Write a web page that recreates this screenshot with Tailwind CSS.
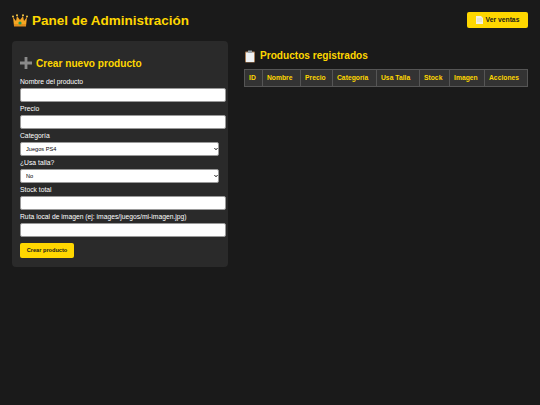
<!DOCTYPE html>
<html lang="es">
<head>
    <meta charset="UTF-8">
    <title>Panel de Administración</title>
    <script src="https://cdn.jsdelivr.net/npm/@tailwindcss/browser@4"></script>
</head>
<body class="bg-[#1a1a1a] h-[405px] overflow-hidden font-['Liberation_Sans',sans-serif] text-white">
    <div class="px-3 pt-3">
        <!-- Header -->
        <div class="flex justify-between items-center h-4 mb-[13px]">
            <h1 class="flex items-center gap-[4px] text-[13.5px] font-bold text-[#ffd700] leading-none">
                <svg class="w-4 h-4" viewBox="0 0 16 16">
                    <path d="M1 5 L4 9 L5 4 L8 8 L11 4 L12 9 L15 5 L14 14 L2 14 Z" fill="#f5a623"/>
                    <path d="M2 12h12v2.5H2z" fill="#e08e1b"/>
                    <circle cx="8" cy="11" r="1.6" fill="#1f9d55"/>
                    <circle cx="1" cy="4.5" r="1" fill="#f7c948"/><circle cx="5" cy="3.3" r="1" fill="#f7c948"/>
                    <circle cx="11" cy="3.3" r="1" fill="#f7c948"/><circle cx="15" cy="4.5" r="1" fill="#f7c948"/>
                </svg>
                <span class="pt-[2px]">Panel de Administración</span>
            </h1>
            <a class="flex items-center gap-[3px] h-4 w-[61px] justify-center bg-[#ffd700] rounded-[2px] text-[#1a1a1a] text-[6.75px] font-bold">
                <svg class="w-[7px] h-[8px]" viewBox="0 0 7 8"><path d="M0 0h5l2 2v6H0z" fill="#f3f0e0"/><path d="M1 3h5M1 5h5" stroke="#cfcab0" stroke-width=".6"/></svg>
                <span class="pt-[1px]">Ver ventas</span>
            </a>
        </div>

        <div class="flex gap-4 items-start">
            <!-- Form -->
            <div class="w-[216px] h-[226px] bg-[#2a2a2a] rounded-[4px] px-2 pt-[17px]">
                <h2 class="flex items-center gap-[4px] h-[10px] text-[10.125px] font-bold text-[#ffd700] leading-none mb-[10px]">
                    <svg class="w-3 h-3" viewBox="0 0 12 12"><path d="M4.6 0h2.8v4.6H12v2.8H7.4V12H4.6V7.4H0V4.6h4.6z" fill="#8a8a8a"/></svg>
                    <span class="pt-[2px]">Crear nuevo producto</span>
                </h2>
                <label class="block text-[6.75px] leading-[8px] mb-[2px]">Nombre del producto</label>
                <input class="block w-[206px] h-[14px] bg-white rounded-[2px] border border-[#999] mb-[3px]">
                <label class="block text-[6.75px] leading-[8px] mb-[2px]">Precio</label>
                <input class="block w-[206px] h-[14px] bg-white rounded-[2px] border border-[#999] mb-[3px]">
                <label class="block text-[6.75px] leading-[8px] mb-[2px]">Categoría</label>
                <div class="relative w-[199px] h-[14px] mb-[3px]">
                    <select class="block appearance-none w-full h-full bg-white rounded-[2px] text-black text-[5.625px] pl-[5px] border border-[#999]">
                        <option>Juegos PS4</option>
                    </select>
                    <svg class="absolute right-[1px] top-[5px] w-[4px] h-[4px] pointer-events-none" viewBox="0 0 4 4"><path d="M0.4 1 L2 2.8 L3.6 1" fill="none" stroke="#222" stroke-width="1"/></svg>
                </div>
                <label class="block text-[6.75px] leading-[8px] mb-[2px]">¿Usa talla?</label>
                <div class="relative w-[199px] h-[14px] mb-[3px]">
                    <select class="block appearance-none w-full h-full bg-white rounded-[2px] text-black text-[5.625px] pl-[5px] border border-[#999]">
                        <option>No</option>
                    </select>
                    <svg class="absolute right-[1px] top-[5px] w-[4px] h-[4px] pointer-events-none" viewBox="0 0 4 4"><path d="M0.4 1 L2 2.8 L3.6 1" fill="none" stroke="#222" stroke-width="1"/></svg>
                </div>
                <label class="block text-[6.75px] leading-[8px] mb-[2px]">Stock total</label>
                <input class="block w-[206px] h-[14px] bg-white rounded-[2px] border border-[#999] mb-[3px]">
                <label class="block text-[6.75px] leading-[8px] mb-[2px]">Ruta local de imagen (ej: images/juegos/mi-imagen.jpg)</label>
                <input class="block w-[206px] h-[14px] bg-white rounded-[2px] border border-[#999] mb-[6px]">
                <button class="block w-[54px] h-[15px] bg-[#ffd700] rounded-[2px] text-[#1a1a1a] text-[5.625px] font-bold">Crear producto</button>
            </div>

            <!-- Table -->
            <div class="w-[284px] pt-[9px]">
                <h2 class="flex items-center gap-[4px] text-[10.125px] font-bold text-[#ffd700] leading-none mb-[6px]">
                    <svg class="w-3 h-[13px]" viewBox="0 0 12 13"><rect x="1" y="1.5" width="10" height="11" rx="1" fill="#a9805a"/><rect x="2" y="2.5" width="8" height="9.5" fill="#eef2f5"/><rect x="4" y="0.5" width="4" height="2.5" fill="#9aa5ad"/></svg>
                    Productos registrados
                </h2>
                <table class="w-full border-collapse table-fixed text-[6.75px] font-bold text-[#ffd700]">
                    <tr class="h-[17px] bg-[#333]">
                        <th class="border border-[#555] w-[18px] text-left pl-[4px]">ID</th>
                        <th class="border border-[#555] w-[38px] text-left pl-[4px]">Nombre</th>
                        <th class="border border-[#555] w-[32px] text-left pl-[4px]">Precio</th>
                        <th class="border border-[#555] w-[44px] text-left pl-[4px]">Categoría</th>
                        <th class="border border-[#555] w-[43px] text-left pl-[4px]">Usa Talla</th>
                        <th class="border border-[#555] w-[30px] text-left pl-[4px]">Stock</th>
                        <th class="border border-[#555] w-[35px] text-left pl-[4px]">Imagen</th>
                        <th class="border border-[#555] text-left pl-[4px]">Acciones</th>
                    </tr>
                </table>
            </div>
        </div>
    </div>
</body>
</html>
